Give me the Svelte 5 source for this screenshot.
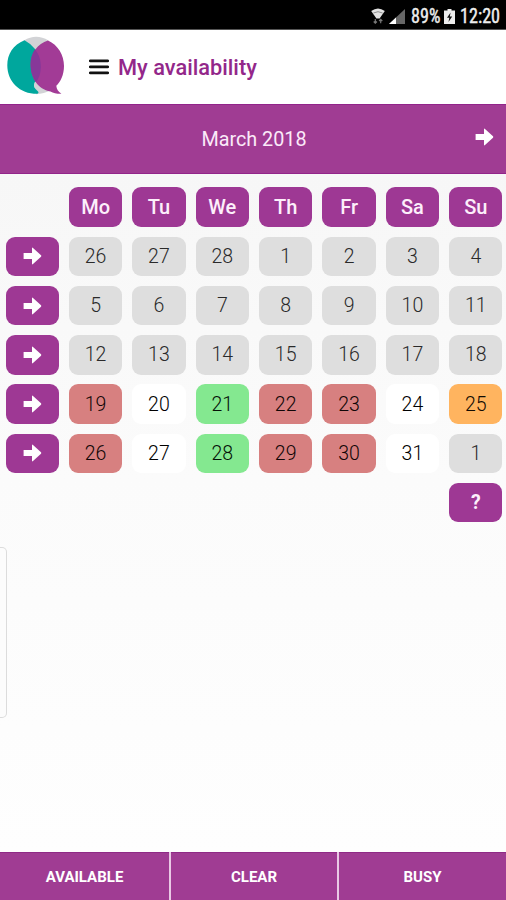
<script>
  const weekdays = ['Mo', 'Tu', 'We', 'Th', 'Fr', 'Sa', 'Su'];

  const day = (n, status = 'past') => ({ n, status });

  let weeks = $state([
    [26, 27, 28, 1, 2, 3, 4].map((n) => day(n)),
    [5, 6, 7, 8, 9, 10, 11].map((n) => day(n)),
    [12, 13, 14, 15, 16, 17, 18].map((n) => day(n)),
    [
      day(19, 'busy'), day(20, 'open'), day(21, 'available'), day(22, 'busy'),
      day(23, 'busy'), day(24, 'open'), day(25, 'partial'),
    ],
    [
      day(26, 'busy'), day(27, 'open'), day(28, 'available'), day(29, 'busy'),
      day(30, 'busy'), day(31, 'open'), day(1),
    ],
  ]);
  const actions = ['Available', 'Clear', 'Busy'];
</script>

{#snippet arrow()}
  <svg class="arrow" viewBox="0 0 19 18" aria-hidden="true">
    <path d="M0.6 5.9H9V1.2Q9 0 10 0.9L18 8.3Q18.6 9 18 9.7L10 17.1Q9 18 9 16.8V12.1H0.6Z" fill="#fff" />
  </svg>
{/snippet}

<div class="screen">
  <div class="status">
    <svg class="wifi" viewBox="0 0 14 16" aria-hidden="true">
      <path d="M0.2 3Q7 -2 13.8 3L8.6 10.5H5.4Z" fill="#e2e2e2" />
      <path d="M2.4 5Q7 2.4 11.6 5" fill="none" stroke="#777" stroke-width="0.8" />
      <path d="M4.3 11V15M2.7 13.5L4.3 15.2L5.9 13.5M9.7 15.2V11.3M8.1 13L9.7 11.3L11.3 13" fill="none" stroke="#777" stroke-width="1.2" />
    </svg>
    <svg class="signal" viewBox="0 0 16 15" aria-hidden="true">
      <path d="M0 15L16 0V15Z" fill="#666" />
      <path d="M0 15L7 8.5V15Z" fill="#fff" />
    </svg>
    <span class="percent">89%</span>
    <svg class="battery" viewBox="0 0 11 15" aria-hidden="true">
      <path d="M3.5 0H7.5V1.6H11V15H0V1.6H3.5Z" fill="#eee" />
      <path d="M6.6 3.5L3 8.8H5.3L4.5 13L8.2 7.4H5.8Z" fill="#111" />
    </svg>
    <span class="clock">12:20</span>
  </div>

  <header>
    <svg class="logo" viewBox="0 0 58 59" aria-hidden="true">
      <path d="M17 4.5Q29 -3 41.5 4.5L29 16ZM26 45L44 54Q37 58 29 58.2Z" fill="#d2d3d6" />
      <path d="M17.5 4.2C6 9 0.3 18 0.3 29.2C0.3 46 13 58 30.5 57.8C32 56.6 31.8 55.8 30 54.4C27.4 52.4 26.4 50 27.2 47.2L33 37V19L28 13Q23 7 17.5 4.2Z" fill="#00a79d" />
      <path d="M41 4.5C51 9 57 19 57 30C57 39 53.5 46 49.3 49.8C49.5 53 51.2 55.6 54.4 57.8C50 58 46.5 56.8 43.4 55.4C31 53.5 23.6 42 23.6 28.5C23.6 17 30.5 8 41 4.5Z" fill="#a23b96" />
      <path d="M28 13.2C32.4 19 33.8 24 33.8 31C33.8 37 32 42.5 28.8 46.3C25.4 41.4 23.6 35 23.6 28.5C23.6 22.5 25.2 17.5 28 13.2Z" fill="#873899" />
    </svg>
    <svg class="menu" viewBox="0 0 20 16" aria-hidden="true">
      <path d="M1.3 1.9H18.7M1.3 7.9H18.7M1.3 13.8H18.7" stroke="#111" stroke-width="2.8" stroke-linecap="round" />
    </svg>
    <h1>My availability</h1>
  </header>

  <div class="month">
    <span></span>
    <h2>March 2018</h2>
    <button class="next" aria-label="Next month">{@render arrow()}</button>
  </div>

  <main>
    <div class="calendar">
      <span></span>
      {#each weekdays as name}
        <button class="cell purple weekday">{name}</button>
      {/each}
      {#each weeks as week}
        <button class="cell purple" aria-label="Select week">{@render arrow()}</button>
        {#each week as d}
          <button class="cell {d.status}">{d.n}</button>
        {/each}
      {/each}
      <button class="cell purple help">?</button>
    </div>
    <div class="drawer"></div>
  </main>

  <footer>
    {#each actions as label}
      <button>{label}</button>
    {/each}
  </footer>
</div>

<style>
  :global(body) {
    margin: 0;
  }

  .screen {
    display: flex;
    flex-direction: column;
    width: 506px;
    height: 900px;
    overflow: hidden;
    background: #fff;
    font-family: Roboto, sans-serif;
  }

  button {
    border: 0;
    margin: 0;
    padding: 0;
    background: none;
    color: inherit;
    font: inherit;
  }

  h1,
  h2 {
    margin: 0;
    font-weight: 500;
  }

  .status {
    display: flex;
    align-items: center;
    justify-content: flex-end;
    box-sizing: border-box;
    flex: none;
    height: 30px;
    padding: 3px 6px 0 0;
    background: #000;
    border-bottom: 1px solid #555;
    color: #eee;
    font-family: "Roboto Condensed", Roboto, sans-serif;
    font-size: 19.5px;
  }

  .wifi {
    width: 14px;
    height: 16px;
    margin-right: 4px;
  }

  .signal {
    width: 16px;
    height: 15px;
    margin-right: 6px;
  }

  .percent {
    width: 29px;
    margin-right: 4px;
  }

  .battery {
    width: 11px;
    height: 15px;
    margin-right: 5px;
  }

  .clock {
    width: 40px;
  }

  .percent,
  .clock {
    display: block;
    white-space: nowrap;
    transform: scaleX(0.93);
    transform-origin: left;
    -webkit-text-stroke: 0.4px #eee;
  }

  header {
    display: flex;
    align-items: center;
    box-sizing: border-box;
    flex: none;
    height: 74px;
    padding-left: 7px;
  }

  .logo {
    width: 58px;
    height: 59px;
    margin: -3px 24px 0 0;
  }

  .menu {
    width: 20px;
    height: 16px;
    margin-right: 9px;
  }

  h1 {
    padding-top: 2px;
    color: #93278a;
    font-size: 21.8px;
    line-height: 26px;
  }

  .month {
    display: grid;
    grid-template-columns: 60px 1fr 60px;
    align-items: center;
    box-sizing: border-box;
    flex: none;
    height: 70px;
    background: #a03c93;
    border-top: 1px solid #92248a;
    border-bottom: 1px solid #92248a;
    color: #fbeaf9;
    text-align: center;
  }

  h2 {
    padding-left: 2px;
    font-size: 19.8px;
    font-weight: 400;
  }

  .arrow {
    display: block;
    width: 19px;
    height: 18px;
  }

  .next {
    justify-self: end;
    margin: -4px 12px 0 0;
  }

  main {
    flex: 1;
    background: linear-gradient(#f7f7f7, #fbfbfb 45%, #fefefe);
  }

  .calendar {
    display: grid;
    grid-template-columns: repeat(8, 53.2px);
    grid-auto-rows: 39.4px;
    gap: 9.9px 10.2px;
    padding: 13.3px 0 0 5.6px;
  }

  .cell {
    display: flex;
    align-items: center;
    justify-content: center;
    border-radius: 9px;
    font-size: 19.5px;
    font-weight: 300;
  }

  .purple {
    background: #9e3894;
    color: #fdeffb;
  }

  .weekday {
    font-size: 20px;
    font-weight: 500;
  }

  .help {
    grid-column: 8;
    font-weight: 700;
  }

  .past {
    background: #dedede;
    color: #2a2a2a;
  }

  .open {
    background: #fff;
    color: #000;
  }

  .busy {
    background: #d78080;
    color: #100606;
  }

  .available {
    background: #84e890;
    color: #061208;
  }

  .partial {
    background: #ffb45f;
    color: #120b03;
  }

  .drawer {
    box-sizing: border-box;
    width: 7px;
    height: 171px;
    margin-top: 25px;
    background: #fcfcfc;
    border: 1px solid #dcdcdc;
    border-left: 0;
    border-radius: 0 5px 5px 0;
  }

  footer {
    display: grid;
    grid-template-columns: 169px 166px 1fr;
    gap: 2px;
    flex: none;
    height: 48px;
    background: #e9c9e5;
  }

  footer button {
    padding-top: 1px;
    background: #a03c93;
    box-shadow: inset 0 1px #8f2a86;
    color: #fff;
    font-size: 15px;
    font-weight: 700;
    text-transform: uppercase;
  }
</style>
